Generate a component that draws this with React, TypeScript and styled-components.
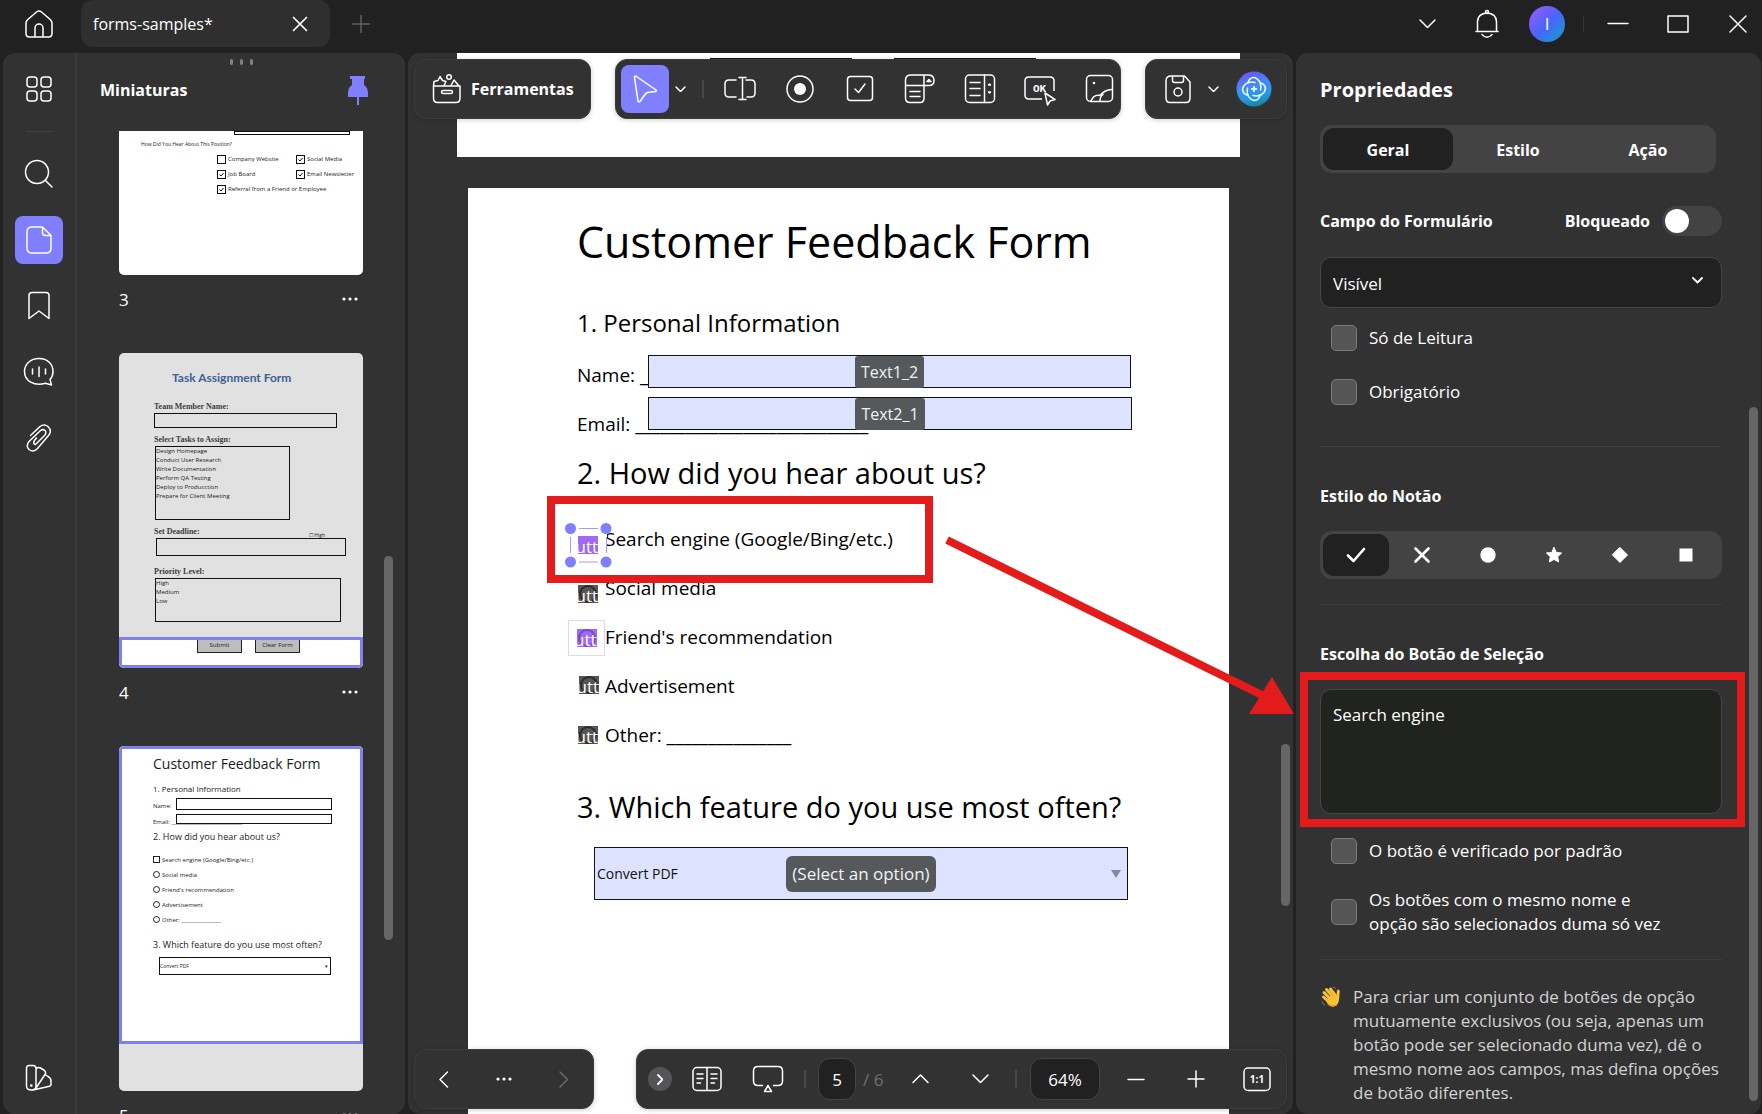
import React from "react";
import styled, { createGlobalStyle, css } from "styled-components";

const accent = "#7f7fff";
const red = "#e41b1b";
const panel = "#323232";
const dark = "#212121";

const Global = createGlobalStyle`
  *, *::before, *::after { box-sizing: border-box; }
  html, body { margin: 0; height: 100%; background: ${dark}; }
  #root { height: 100%; }
  body, button, input, select, textarea {
    font-family: "Open Sans", "Noto Sans", "Liberation Sans", sans-serif;
    font-size: 17px;
    color: #fff;
  }
  h1, h2, h3, p { margin: 0; }
`;

/* ---------- shared parts ---------- */

const Shell = styled.div`
  position: relative;
  display: flex;
  flex-direction: column;
  height: 100vh;
  overflow: hidden;
  background: ${dark};
`;

const IconButton = styled.button<{ $w?: number; $active?: boolean }>`
  display: flex;
  align-items: center;
  justify-content: center;
  flex: none;
  width: ${(p) => p.$w ?? 36}px;
  height: 48px;
  padding: 0;
  border: 0;
  border-radius: 8px;
  background: ${(p) => (p.$active ? accent : "transparent")};
  cursor: pointer;
`;

const Space = styled.span<{ $w: number }>`
  flex: none;
  width: ${(p) => p.$w}px;
`;

const Line = styled.span<{ $thin?: boolean }>`
  flex: none;
  width: ${(p) => (p.$thin ? 1 : 2)}px;
  height: 18px;
  background: ${(p) => (p.$thin ? "#333" : "#484848")};
`;

const Scrollbar = styled.div<{ $rows: string }>`
  display: grid;
  grid-template-rows: ${(p) => p.$rows};
  width: 9px;
  &::before { content: ""; }
`;

const ScrollThumb = styled.span`
  border-radius: 5px;
  background: #666;
`;

type IconProps = { w: number; h: number; sw?: number; color?: string; children: React.ReactNode };
const Icon = ({ w, h, sw = 1.5, color = "#fff", children }: IconProps) => (
  <svg width={w} height={h} viewBox={`0 0 ${w} ${h}`} fill="none" stroke={color} strokeWidth={sw}
    strokeLinecap="round" strokeLinejoin="round" aria-hidden="true">
    {children}
  </svg>
);

const Chevron = ({ w = 10, dir = "down", color, sw }: { w?: number; dir?: "down" | "up" | "left" | "right"; color?: string; sw?: number }) => {
  const s = w / 2;
  const paths = {
    down: [w + 2, s + 2, `M1 1L${s + 1} ${s + 1}L${w + 1} 1`],
    up: [w + 2, s + 2, `M1 ${s + 1}L${s + 1} 1L${w + 1} ${s + 1}`],
    left: [s + 2, w + 2, `M${s + 1} 1L1 ${s + 1}L${s + 1} ${w + 1}`],
    right: [s + 2, w + 2, `M1 1L${s + 1} ${s + 1}L1 ${w + 1}`],
  } as const;
  const [pw, ph, d] = paths[dir];
  return <Icon w={pw} h={ph} color={color} sw={sw}><path d={d} /></Icon>;
};

const Dots = ({ color = "#fff" }: { color?: string }) => (
  <Icon w={16} h={4} sw={0}>
    <g fill={color}><circle cx="2" cy="2" r="1.6" /><circle cx="8" cy="2" r="1.6" /><circle cx="14" cy="2" r="1.6" /></g>
  </Icon>
);

/* ---------- title bar ---------- */

const TitleBar = styled.header`
  display: flex;
  align-items: center;
  flex: none;
  height: 53px;
  padding: 0 6px 6px 15px;
`;

const Tab = styled.div`
  display: flex;
  align-items: center;
  justify-content: space-between;
  width: 249px;
  height: 47px;
  padding: 0 8px 0 12px;
  border-radius: 12px;
  background: #2f2f2f;
  font-size: 16px;
`;

const Avatar = styled.button`
  width: 36px;
  height: 36px;
  padding: 0;
  border: 0;
  border-radius: 50%;
  background: linear-gradient(135deg, #9a5cf8 5%, #4a63fa 50%, #0ba5c4 100%);
`;

const Grow = styled.span`
  flex: 1;
`;

/* ---------- frame ---------- */

const Body = styled.div`
  display: grid;
  grid-template-columns: 402px minmax(0, 1fr) 465px;
  gap: 3px;
  flex: 1;
  min-height: 0;
  padding: 0 1px 0 3px;
`;

const Panel = styled.section`
  min-height: 0;
  overflow: hidden;
  border-radius: 12px;
  background: ${panel};
`;

const LeftPanel = styled(Panel)`
  display: flex;
`;

const Rail = styled.nav`
  display: flex;
  flex-direction: column;
  align-items: center;
  gap: 18px;
  width: 74px;
  padding: 12px 0;
  border-right: 2px solid #3a3a3a;
`;

const RailLine = styled.span`
  width: 27px;
  height: 1px;
  background: #424242;
`;

const Thumbs = styled.div`
  display: flex;
  flex-direction: column;
  flex: 1;
  min-width: 0;
`;

const Grip = styled.div`
  display: flex;
  justify-content: center;
  gap: 7px;
  height: 12px;
  padding-top: 6px;
  span { width: 3px; height: 6px; border-radius: 2px; background: #808080; }
`;

const ThumbsHead = styled.div`
  display: flex;
  align-items: center;
  justify-content: space-between;
  height: 50px;
  margin-bottom: 16px;
  padding: 0 36px 0 23px;
  h2 { font-size: 16px; font-weight: 700; }
`;

const ThumbsBody = styled.div`
  display: flex;
  justify-content: space-between;
  flex: 1;
  min-height: 0;
  overflow: hidden;
  padding: 0 12px 0 42px;
`;

const ThumbList = styled.ol`
  display: flex;
  flex-direction: column;
  gap: 30px;
  width: 244px;
  margin: 0;
  padding: 0;
  list-style: none;
`;

const Mini = styled.div<{ $h: number; $cut?: boolean }>`
  height: ${(p) => p.$h}px;
  overflow: hidden;
  border-radius: ${(p) => (p.$cut ? "0 0 5px 5px" : "5px")};
  background: ${(p) => (p.$cut ? "#fff" : "#e1e1e1")};
  color: #1c1c1c;
  white-space: nowrap;
`;

const MiniCaption = styled.div`
  display: flex;
  align-items: center;
  justify-content: space-between;
  height: 48px;
  padding-right: 5px;
`;

const MiniText = styled.p<{ $size: number; $lh: number; $mt?: number; $serif?: boolean }>`
  margin-top: ${(p) => p.$mt ?? 0}px;
  font-size: ${(p) => p.$size}px;
  line-height: ${(p) => p.$lh}px;
  ${(p) => p.$serif && css`font-family: "Liberation Serif", serif; font-weight: 700; color: #3c3c3c;`}
`;

const MiniBox = styled.div<{ $w: number; $h: number; $mt?: number; $ml?: number }>`
  display: flex;
  flex: none;
  flex-direction: column;
  width: ${(p) => p.$w}px;
  height: ${(p) => p.$h}px;
  margin: ${(p) => p.$mt ?? 0}px 0 0 ${(p) => p.$ml ?? 0}px;
  border: 1px solid #111;
  font-size: 6px;
  line-height: 9px;
`;

const MiniTitle = styled.p`
  padding: 17px 0 0 18px;
  color: #3d5f94;
  font-family: Lato, "Open Sans", sans-serif;
  font-size: 12px;
  font-weight: 700;
  line-height: 16px;
`;

const MiniArea = styled.div<{ $h: number; $pl: number; $pt?: number }>`
  height: ${(p) => p.$h}px;
  padding: ${(p) => p.$pt ?? 0}px 0 0 ${(p) => p.$pl}px;
`;

const InView = styled.div<{ $h: number }>`
  height: ${(p) => p.$h}px;
  border: 3px solid #7f80ec;
  background: #fff;
`;

const MiniButtons = styled.div`
  display: flex;
  gap: 13px;
  padding-left: 75px;
  span {
    width: 45px;
    height: 13px;
    border: 1px solid #222;
    border-top: 0;
    background: #bdbdbd;
    font-size: 6px;
    line-height: 11px;
    text-align: center;
  }
`;

const MiniQuestion = styled.p`
  padding: 4px 0 0 22px;
  font-size: 5px;
  line-height: 10px;
`;

const MiniCheckGrid = styled.div`
  display: grid;
  grid-template-columns: 79px 1fr;
  row-gap: 6px;
  padding: 6px 0 0 98px;
  font-size: 6px;
  line-height: 9px;
`;

const MiniCheck = styled.span`
  display: flex;
  gap: 2px;
  svg { flex: none; }
`;

const MiniLines = styled.div`
  margin-top: 3px;
`;

const MiniRow = styled.div`
  display: flex;
  height: 16px;
  font-size: 6px;
  line-height: 16px;
  > span { width: 23px; }
  > div { background: #fff; z-index: 1; }
`;

const MiniOptions = styled.div`
  margin: 8px 0 11px;
`;

const MiniOption = styled.div`
  display: flex;
  align-items: center;
  gap: 2px;
  height: 15px;
  font-size: 6px;
`;

const MiniMark = styled.i<{ $round?: boolean }>`
  width: 7px;
  height: 7px;
  border: 1px solid #222;
  border-radius: ${(p) => (p.$round ? "50%" : "0")};
`;

const MiniSelect = styled.div`
  display: flex;
  justify-content: space-between;
  align-items: center;
  width: 172px;
  height: 18px;
  margin: 5px 0 0 6px;
  padding-right: 2px;
  border: 1px solid #111;
  font-size: 5px;
`;

const MiniSplit = styled.div`
  display: flex;
  justify-content: space-between;
  align-items: flex-end;
  padding-right: 38px;
  small { font-size: 5px; line-height: 6px; }
`;

/* ---------- document ---------- */

const Viewer = styled(Panel)`
  position: relative;
`;

const Pages = styled.div`
  display: flex;
  flex-direction: column;
  align-items: center;
  gap: 31px;
  height: 100%;
  padding-right: 4px;
`;

const PrevPage = styled.div`
  display: flex;
  justify-content: center;
  flex: none;
  gap: 42px;
  width: 783px;
  height: 104px;
  padding: 5px 0 0 48px;
  background: #fff;
  span { width: 142px; height: 2px; background: #111; }
`;

const Page = styled.article`
  position: relative;
  flex: none;
  width: 761px;
  height: 1076px;
  padding: 24px 0 0 109px;
  background: #fff;
  color: #000;
  white-space: nowrap;
  h1, h2, h3 { font-weight: 400; }
  h1 { font-size: 43px; line-height: 60px; }
  h2 { margin-top: 33px; font-size: 24px; line-height: 36px; }
  h3 { font-size: 29px; line-height: 40px; }
`;

const FormLine = styled.p<{ $indent?: boolean }>`
  height: 49px;
  padding-left: ${(p) => (p.$indent ? 28 : 0)}px;
  font-size: 19px;
  line-height: 49px;
`;

const Lines = styled.div<{ $mt: number; $mb: number }>`
  margin: ${(p) => p.$mt}px 0 ${(p) => p.$mb}px;
`;

/* Form widgets sit on the page at free positions. */
const Widget = styled.div<{ $x: number; $y: number; $w: number; $h: number }>`
  position: absolute;
  left: ${(p) => p.$x}px;
  top: ${(p) => p.$y}px;
  width: ${(p) => p.$w}px;
  height: ${(p) => p.$h}px;
  display: flex;
  align-items: center;
  justify-content: center;
`;

const fieldSkin = css`
  position: absolute;
  inset: 0;
  width: 100%;
  height: 100%;
  margin: 0;
  border: 1px solid #111;
  border-radius: 0;
  background: #dde2ff;
  color: #111;
  outline: 0;
`;

const FieldInput = styled.input`
  ${fieldSkin}
`;

const FieldSelect = styled.select`
  ${fieldSkin}
  appearance: none;
  padding: 0 2px;
  font-size: 14px;
`;

const FieldArrow = styled.span`
  position: absolute;
  right: 7px;
  border: 5px solid transparent;
  border-top: 8px solid #8388a8;
  border-bottom: 0;
`;

const FieldTag = styled.span<{ $big?: boolean }>`
  position: relative;
  padding: 0 6px;
  border-radius: ${(p) => (p.$big ? 6 : 3)}px;
  background: #56595b;
  color: #f2f2f2;
  font-size: ${(p) => (p.$big ? 17 : 16)}px;
  line-height: ${(p) => (p.$big ? 36 : 32)}px;
`;

const Chip = styled.span<{ $on?: boolean; $ring?: boolean }>`
  position: relative;
  display: flex;
  justify-content: flex-end;
  width: 20px;
  height: 18px;
  overflow: hidden;
  background: ${(p) => (p.$on ? "#a069f2" : "#565656")};
  color: #fff;
  line-height: 22px;
  ${(p) => p.$ring && css`
    &::before {
      content: "";
      position: absolute;
      inset: 0 1px;
      border: 2px solid ${p.$on ? "#7a48c8" : "#2b2b2b"};
      border-radius: 50%;
    }
  `}
  b { position: relative; font-weight: 400; }
`;

const Picked = styled.span`
  position: absolute;
  inset: 0;
  border: 1px solid #dcd8fa;
`;

const Handles = styled.svg`
  position: absolute;
  inset: 0;
`;

/* ---------- floating bars ---------- */

const Floating = styled.div<{ $bottom?: boolean }>`
  position: absolute;
  left: 6px;
  right: 6px;
  ${(p) => (p.$bottom ? "bottom: 5px;" : "top: 6px;")}
  display: flex;
  justify-content: space-between;
  gap: 24px;
`;

const Bar = styled.div<{ $grow?: boolean; $w?: number; $px?: number }>`
  display: flex;
  align-items: center;
  flex: ${(p) => (p.$grow ? "1" : "none")};
  min-width: 0;
  ${(p) => p.$w && `width: ${p.$w}px;`}
  height: 60px;
  padding: 0 ${(p) => p.$px ?? 5}px;
  border: 1px solid #3c3c3c;
  border-radius: 12px;
  background: ${panel};
  box-shadow: 0 1px 5px rgba(0, 0, 0, 0.2);
`;

const Tools = styled.button`
  display: flex;
  align-items: center;
  gap: 10px;
  padding: 0 12px;
  border: 0;
  background: none;
  font-size: 16px;
  font-weight: 700;
`;

const ToolGroup = styled.div`
  display: flex;
  gap: 24px;
`;

const Round = styled.button`
  display: flex;
  align-items: center;
  justify-content: center;
  flex: none;
  width: 24px;
  height: 24px;
  padding: 0;
  border: 0;
  border-radius: 50%;
  background: #555557;
`;

const NumberBox = styled.input<{ $w: number }>`
  flex: none;
  width: ${(p) => p.$w}px;
  height: 42px;
  padding: 0;
  border: 1px solid #444;
  border-radius: 12px;
  background: ${dark};
  text-align: center;
  outline: 0;
`;

const Total = styled.span`
  width: 32px;
  padding-left: 7px;
  color: #707070;
  white-space: nowrap;
`;

const ViewerScroll = styled.div`
  position: absolute;
  top: 0;
  right: 3px;
  bottom: 0;
  display: flex;
`;

/* ---------- properties ---------- */

const Props = styled(Panel)`
  display: flex;
  justify-content: space-between;
  padding-right: 3px;
`;

const PropsBody = styled.div`
  display: flex;
  flex-direction: column;
  width: 426px;
  padding: 23px 0 0 24px;
  h2 { font-size: 20px; font-weight: 700; line-height: 28px; }
`;

const Segments = styled.div<{ $mt: number; $wide?: boolean }>`
  display: flex;
  flex: none;
  height: 48px;
  margin: ${(p) => p.$mt}px ${(p) => (p.$wide ? 0 : 6)}px 0 0;
  padding: 3px;
  border-radius: 12px;
  background: #434343;
`;

const Segment = styled.button<{ $on?: boolean }>`
  display: flex;
  align-items: center;
  justify-content: center;
  flex: 1 1 0;
  min-width: 0;
  padding: 2px 0 0;
  border: 0;
  border-radius: 11px;
  background: ${(p) => (p.$on ? dark : "transparent")};
  font-size: 16px;
  font-weight: 700;
`;

const MarkSegment = styled(Segment)`
  padding: 0;
`;

const FieldHead = styled.div`
  display: flex;
  align-items: center;
  height: 30px;
  margin-top: 33px;
  font-size: 16px;
  font-weight: 700;
  label:first-child { flex: 1; }
`;

const Switch = styled.input`
  appearance: none;
  width: 60px;
  height: 30px;
  margin: 0 0 0 12px;
  padding: 3px;
  border-radius: 15px;
  background: #434343;
  &::before {
    content: "";
    display: block;
    width: 24px;
    height: 24px;
    border-radius: 50%;
    background: #fff;
  }
`;

const SelectWrap = styled.div`
  position: relative;
  margin-top: 21px;
  svg { position: absolute; right: 19px; top: 20px; pointer-events: none; }
`;

const Select = styled.select`
  appearance: none;
  display: block;
  width: 100%;
  height: 51px;
  padding: 2px 12px 0;
  border: 1px solid #464646;
  border-radius: 11px;
  background: ${dark};
`;

const CheckRow = styled.label<{ $mt: number }>`
  display: flex;
  align-items: center;
  gap: 12px;
  min-height: 26px;
  margin-top: ${(p) => p.$mt}px;
  padding-left: 11px;
  line-height: 24px;
  span { max-width: 300px; }
`;

const Check = styled.input`
  appearance: none;
  flex: none;
  width: 26px;
  height: 26px;
  margin: 0;
  border: 1px solid #7a7a7a;
  border-radius: 5px;
  background: #555;
`;

const Rule = styled.hr<{ $mt: number }>`
  width: 100%;
  height: 1px;
  margin: ${(p) => p.$mt}px 0 0;
  border: 0;
  background: #3e3e3e;
`;

const Heading = styled.h3`
  margin-top: 37px;
  font-size: 16px;
  font-weight: 700;
  line-height: 24px;
`;

const Choice = styled.div`
  position: relative;
  height: 125px;
  margin-top: 23px;
`;

const TextArea = styled.textarea`
  display: block;
  width: 100%;
  height: 100%;
  padding: 13px 12px;
  border: 1px solid #454745;
  border-radius: 11px;
  background: #21231f;
  line-height: 24px;
  resize: none;
  outline: 0;
`;

const Hint = styled.div`
  display: flex;
  gap: 11px;
  margin-top: 25px;
  color: #d2d2d2;
  line-height: 24px;
  svg { flex: none; }
`;

/* ---------- callouts ---------- */

const ChoiceMark = styled.span`
  position: absolute;
  inset: -17px -23px -13px -20px;
  border: 8px solid ${red};
  pointer-events: none;
`;

const OptionMark = styled.span`
  position: absolute;
  left: 79px;
  top: 308px;
  width: 386px;
  height: 87px;
  border: 8px solid ${red};
  pointer-events: none;
`;

const Arrow = styled.svg`
  position: absolute;
  left: 940px;
  top: 530px;
  pointer-events: none;
`;

/* ---------- content ---------- */

const miniChecks: [string, boolean][] = [
  ["Company Website", false], ["Social Media", true],
  ["Job Board", true], ["Email Newsletter", true],
  ["Referral from a Friend or Employee", true],
];

const tasks = ["Design Homepage", "Conduct User Research", "Write Documentation", "Perform QA Testing", "Deploy to Producction", "Prepare for Client Meeting"];

const options = ["Search engine (Google/Bing/etc.)", "Social media", "Friend's recommendation", "Advertisement"];

const radios = [
  { x: 110, y: 397, on: false },
  { x: 109, y: 441, on: true },
  { x: 111, y: 488, on: false },
  { x: 110, y: 538, on: false },
];

const Caption = ({ n }: { n: number }) => (
  <MiniCaption><span>{n}</span><Dots /></MiniCaption>
);

const Thumb3 = () => (
  <Mini $h={144} $cut>
    <MiniBox $w={116} $h={4} $ml={115} />
    <MiniQuestion>How Did You Hear About This Position?</MiniQuestion>
    <MiniCheckGrid>
      {miniChecks.map(([t, on]) => (
        <MiniCheck key={t}>
          <svg width="9" height="9" viewBox="0 0 9 9" fill="none" stroke="#111" aria-hidden="true">
            <rect x=".5" y=".5" width="8" height="8" />
            {on && <path d="M2.5 4.5L4 6L6.500 3" />}
          </svg>
          {t}
        </MiniCheck>
      ))}
    </MiniCheckGrid>
  </Mini>
);

const Thumb4 = () => (
  <Mini $h={315}>
    <MiniArea $h={284} $pl={35}>
      <MiniTitle>Task Assignment Form</MiniTitle>
      <MiniText $size={8} $lh={12} $mt={15} $serif>Team Member Name:</MiniText>
      <MiniBox $w={183} $h={15} />
      <MiniText $size={8} $lh={12} $mt={6} $serif>Select Tasks to Assign:</MiniText>
      <MiniBox $w={135} $h={74} $ml={1}>{tasks.map((t) => <span key={t}>{t}</span>)}</MiniBox>
      <MiniSplit>
        <MiniText $size={8} $lh={12} $mt={6} $serif>Set Deadline:</MiniText>
        <small>☐ High</small>
      </MiniSplit>
      <MiniBox $w={190} $h={18} $ml={2} />
      <MiniText $size={8} $lh={12} $mt={10} $serif>Priority Level:</MiniText>
      <MiniBox $w={186} $h={44} $ml={1}><span>High</span><span>Medium</span><span>Low</span></MiniBox>
    </MiniArea>
    <InView $h={31}>
      <MiniButtons><span>Submit</span><span>Clear Form</span></MiniButtons>
    </InView>
  </Mini>
);

const Thumb5 = () => (
  <Mini $h={345}>
    <InView $h={298}>
      <MiniArea $h={292} $pl={31} $pt={5}>
        <MiniText $size={14} $lh={20}>Customer Feedback Form</MiniText>
        <MiniText $size={8} $lh={12} $mt={9}>1. Personal Information</MiniText>
        <MiniLines>
          <MiniRow><span>Name:</span><MiniBox $w={156} $h={12} /></MiniRow>
          <MiniRow><span>Email: ___________________________</span><MiniBox $w={156} $h={10} /></MiniRow>
        </MiniLines>
        <MiniText $size={9} $lh={14}>2. How did you hear about us?</MiniText>
        <MiniOptions>
          {options.map((o, i) => <MiniOption key={o}><MiniMark $round={i > 0} />{o}</MiniOption>)}
          <MiniOption><MiniMark $round />Other: _______________</MiniOption>
        </MiniOptions>
        <MiniText $size={9} $lh={14}>3. Which feature do you use most often?</MiniText>
        <MiniSelect><span>Convert PDF</span><span>▾</span></MiniSelect>
      </MiniArea>
    </InView>
  </Mini>
);

const Logo = () => (
  <svg width="36" height="36" viewBox="0 0 36 36" fill="none" aria-hidden="true">
    <defs>
      <linearGradient id="ai" x1="0.35" y1="0" x2="0.6" y2="1">
        <stop offset="0" stopColor="#6b58f0" /><stop offset=".45" stopColor="#3f8ff5" /><stop offset=".75" stopColor="#2399dc" /><stop offset="1" stopColor="#14809a" />
      </linearGradient>
    </defs>
    <circle cx="18" cy="18" r="17.5" fill="url(#ai)" />
    <g stroke="#e9fbff" strokeWidth="1.5" strokeLinecap="round">
      {[0, 90, 180, 270].map((a) => (
        <path key={a} transform={`rotate(${a} 18 18)`} d="M12 12C12.500 7.500 17 5 21 7.800C24.500 10.500 25.500 14.500 24.500 19" />
      ))}
      <path d="M18 15.800v4.400M15.800 18h4.400" strokeWidth="1.8" />
    </g>
  </svg>
);

const Wave = () => (
  <svg width="22" height="24" viewBox="0 0 22 24" fill="none" strokeLinecap="round" aria-hidden="true">
    <g stroke="#f6c236" strokeWidth="3">
      <path d="M4 7.5L11 14.5M6.5 4.5L13 11.5M10.5 4L15 10M3.5 12L9 17" />
    </g>
    <path d="M8 12L15 8.500L16.500 10L17 5.500Q18.500 3.500 19.800 6L19 15Q18 21 13 21.500Q9.500 21.500 6.500 17Z" fill="#f6c236" />
    <path d="M8 19Q12 22.500 16.500 20" stroke="#e39a28" strokeWidth="1.200" />
    <path d="M7 8.500L11.500 13.500M10 6.500L14 11.500" stroke="#d9912a" strokeWidth=".7" />
    <path d="M2 16.500Q2.500 19.500 5 20.500M13 2Q15.500 2.300 16 4" stroke="#777" strokeWidth="1" />
  </svg>
);

const toolIcons: [string, React.ReactNode][] = [
  ["Campo de texto", <Icon w={34} h={26} key="t"><path d="M13 4H6Q2 4 2 8V17Q2 21 6 21H13M23 4H28Q32 4 32 8V17Q32 21 28 21H24M16 1.500H23M16 23.500H23M19.500 1.500V23.500" /></Icon>],
  ["Botão de opção", <Icon w={30} h={30} key="r"><circle cx="15" cy="15" r="13" /><circle cx="15" cy="15" r="6" fill="#fff" stroke="none" /></Icon>],
  ["Caixa de seleção", <Icon w={28} h={28} key="c"><rect x="1.500" y="1.500" width="25" height="24" rx="3" /><path d="M9 14L12.500 17.500L19 9" /></Icon>],
  ["Lista suspensa", <Icon w={32} h={32} key="d"><path d="M7 2H25Q30 2.500 30 7.500Q30 12.500 25 12.500H20V25Q20 29.500 16 29.500H6Q1.500 29.500 1.500 25V7Q1.500 2 7 2ZM20 2V12.500M1.500 12.500H20M6 18.500H16M6 23.500H16" /><path d="M23 8.500L25 6.500L27 8.500Z" fill="#fff" /></Icon>],
  ["Caixa de lista", <Icon w={32} h={32} key="l"><rect x="1.500" y="2" width="29" height="27.500" rx="4" /><path d="M20.500 2V29.500M6 9.500H16M6 15.500H16M6 22.500H16" /><path d="M24.500 12L25.500 11L26.500 12ZM24.500 19L25.500 20L26.500 19Z" fill="#fff" /></Icon>],
  ["Botão", <svg width="34" height="34" viewBox="0 0 34 34" fill="none" stroke="#fff" strokeWidth="1.5" strokeLinejoin="round" key="b" aria-hidden="true"><path d="M19 27H6Q2 27 2 23V9Q2 5 6 5H27Q31 5 31 9V19" /><path d="M22 21L32 27.500L27 29L24.500 33Z" /><text x="10" y="20" fontSize="11" fontWeight="700" stroke="none" fill="#fff" fontFamily="Liberation Mono, monospace">OK</text></svg>],
  ["Imagem", <Icon w={30} h={30} key="i"><rect x="1.500" y="1.500" width="26" height="26" rx="4" /><path d="M6 27Q9 20 15 21.500Q19 16 27 15.500M15 27Q15 22.500 18 20.500" /><circle cx="9" cy="9" r="1.300" fill="#fff" stroke="none" /></Icon>],
];

export default function App() {
  return (
    <Shell>
      <Global />
      <TitleBar>
        <IconButton $w={48} aria-label="Início">
          <Icon w={28} h={30}><path d="M1 14Q1 12 2.500 10.800L11.500 3Q14 1 16.500 3L25.500 10.800Q27 12 27 14V24.500Q27 28 23.500 28H4.500Q1 28 1 24.500ZM10 28V19a4 4 0 0 1 8 0V28" /></Icon>
        </IconButton>
        <Space $w={18} />
        <Tab>
          <span>forms-samples*</span>
          <IconButton $w={44} aria-label="Fechar separador"><Icon w={16} h={16} sw={1.7}><path d="M1.500 1.500L14.500 14.500M14.500 1.500L1.500 14.500" /></Icon></IconButton>
        </Tab>
        <Space $w={13} />
        <IconButton aria-label="Novo separador"><Icon w={18} h={18} color="#606060"><path d="M9 .5V17.500M.5 9H17.500" /></Icon></IconButton>
        <Grow />
        <IconButton aria-label="Mais"><Chevron w={15} /></IconButton>
        <Space $w={24} />
        <IconButton aria-label="Notificações">
          <Icon w={24} h={30}><path d="M2.500 22V12.500Q3 4.500 12 4Q21 4.500 21.500 12.500V22M1 22.500H23M7 25.500Q12 31 17 25.500" /><circle cx="12" cy="3" r="1.500" /></Icon>
        </IconButton>
        <Space $w={24} />
        <Avatar aria-label="Conta">I</Avatar>
        <Space $w={18} />
        <Line $thin />
        <Space $w={16} />
        <IconButton aria-label="Minimizar"><Icon w={22} h={3}><path d="M1 1.500H21" /></Icon></IconButton>
        <Space $w={24} />
        <IconButton aria-label="Maximizar"><Icon w={22} h={18}><rect x="1" y="1" width="20" height="16" /></Icon></IconButton>
        <Space $w={24} />
        <IconButton aria-label="Fechar"><Icon w={18} h={18}><path d="M1 1L17 17M17 1L1 17" /></Icon></IconButton>
      </TitleBar>

      <Body>
        <LeftPanel>
          <Rail aria-label="Painéis">
            <IconButton $w={48} aria-label="Organizar">
              <Icon w={26} h={26}><rect x="1" y="1" width="10" height="10" rx="3" /><rect x="15" y="1" width="10" height="10" rx="3" /><rect x="1" y="15" width="10" height="10" rx="3" /><rect x="15" y="15" width="10" height="10" rx="3" /></Icon>
            </IconButton>
            <RailLine />
            <IconButton $w={48} aria-label="Procurar"><Icon w={30} h={30}><circle cx="13" cy="13" r="11.500" /><path d="M21.500 21.500L28 28" /></Icon></IconButton>
            <IconButton $w={48} $active aria-label="Miniaturas">
              <Icon w={26} h={30}><path d="M6 2H16.500L25 10.500V23Q25 28 20 28H6Q1 28 1 23V7Q1 2 6 2ZM16.500 2V7.500Q16.500 10.500 19.500 10.500H25" /></Icon>
            </IconButton>
            <IconButton $w={48} aria-label="Marcadores"><Icon w={24} h={30}><path d="M5 1.500H19Q22 1.500 22 4.500V27.500L12 20L2 27.500V4.500Q2 1.500 5 1.500Z" /></Icon></IconButton>
            <IconButton $w={48} aria-label="Comentários">
              <Icon w={32} h={30}><path d="M16 1.500C24.500 1.500 30 7 30 14.500C30 18 29 20.500 27 22.500L28.500 28L22.500 26.300C11 29.500 1.500 24 1.500 14.500C1.500 7 7.500 1.500 16 1.500ZM9.500 12V17M16 10V19.500M22.500 12V17" /></Icon>
            </IconButton>
            <IconButton $w={48} aria-label="Anexos">
              <Icon w={26} h={30}><path d="M4.500 12.500L14 3.500Q18 .5 22 3.500Q26.500 8 22.500 12.500L11.500 25.500Q7.500 30 3 26.500Q-.5 23 3 18.500L14.500 7.500Q17.500 5.500 19.500 8Q20.500 10 18.500 12.500L9.500 21.500M10.500 15L8.500 17.500Q7 20 8.500 21.200" /></Icon>
            </IconButton>
            <Grow />
            <IconButton $w={48} aria-label="Tema">
              <Icon w={28} h={28}><path d="M4 1.500H8Q11 1.500 11 4.500V22Q11 26 6.500 26Q1.500 26 1.500 22V4.500Q1.500 1.500 4 1.500ZM11 5Q13 2.500 15.500 4L19.500 6.500Q21.500 8.500 20 10.500L11 24M20 10.500L23 12.500Q26 14 26 17V19.500Q26.500 22 23.500 22.500L8 26" /><circle cx="6.300" cy="21.500" r=".6" /></Icon>
            </IconButton>
          </Rail>
          <Thumbs>
            <Grip><span /><span /><span /></Grip>
            <ThumbsHead>
              <h2>Miniaturas</h2>
              <Icon w={22} h={30} color={accent} sw={0}><path fill={accent} d="M3 1H18V4H17V10Q21 12.500 21 18V22H12V30H10V22H1V18Q1 12.500 5 10V4H3Z" /></Icon>
            </ThumbsHead>
            <ThumbsBody>
              <ThumbList>
                <li><Thumb3 /><Caption n={3} /></li>
                <li><Thumb4 /><Caption n={4} /></li>
                <li><Thumb5 /><Caption n={5} /></li>
              </ThumbList>
              <Scrollbar $rows="425fr 384fr 174fr"><ScrollThumb /></Scrollbar>
            </ThumbsBody>
          </Thumbs>
        </LeftPanel>

        <Viewer>
          <Pages>
            <PrevPage><span /><span /></PrevPage>
            <Page>
              <h1>Customer Feedback Form</h1>
              <h2>1. Personal Information</h2>
              <Lines $mt={10} $mb={4}>
                <FormLine>Name: ___________________________</FormLine>
                <FormLine>Email: ____________________________</FormLine>
              </Lines>
              <h3>2. How did you hear about us?</h3>
              <Lines $mt={22} $mb={27}>
                {options.map((o) => <FormLine $indent key={o}>{o}</FormLine>)}
                <FormLine $indent>Other: _______________</FormLine>
              </Lines>
              <h3>3. Which feature do you use most often?</h3>

              <Widget $x={180} $y={167} $w={483} $h={33}><FieldInput aria-label="Name" readOnly /><FieldTag>Text1_2</FieldTag></Widget>
              <Widget $x={180} $y={209} $w={484} $h={33}><FieldInput aria-label="Email" readOnly /><FieldTag>Text2_1</FieldTag></Widget>
              <Widget $x={126} $y={659} $w={534} $h={53}>
                <FieldSelect aria-label="Feature"><option>Convert PDF</option></FieldSelect>
                <FieldArrow />
                <FieldTag $big>(Select an option)</FieldTag>
              </Widget>
              {radios.map((r) => (
                <Widget key={r.y} $x={r.on ? r.x - 9 : r.x} $y={r.on ? r.y - 9 : r.y} $w={r.on ? 37 : 20} $h={r.on ? 36 : 18}>
                  {r.on && <Picked />}
                  <Chip $on={r.on} $ring><b>utt</b></Chip>
                </Widget>
              ))}
              <Widget $x={96} $y={334} $w={48} $h={46}>
                <Handles width="48" height="46" viewBox="0 0 48 46" aria-hidden="true">
                  <rect x="6" y="6" width="37" height="34" fill="#fff" />
                  <path d="M15 6.500H34M15 40H34M6.500 15V31M42.500 15V31" stroke="#9c9cf5" />
                  <g fill={accent}><circle cx="6.500" cy="6.500" r="5.500" /><circle cx="42" cy="6.500" r="5.500" /><circle cx="6.500" cy="40" r="5.500" /><circle cx="42" cy="40" r="5.500" /></g>
                </Handles>
                <Chip $on><b>utt</b></Chip>
              </Widget>
              <OptionMark />
            </Page>
          </Pages>

          <ViewerScroll><Scrollbar $rows="690fr 162fr 208fr"><ScrollThumb /></Scrollbar></ViewerScroll>

          <Floating>
            <Bar $w={177}>
              <Tools>
                <Icon w={29} h={32}><path d="M1.500 13H28V25Q28 29.500 24 29.500H5.500Q1.500 29.500 1.500 25ZM1.500 13L2 8.500L6 7.500L8 3.500L10.500 7.500L14 8.500L12 12.500M19 12.500L22 7L26.500 12.500" /><circle cx="17" cy="4" r="2.300" /><rect x="9.500" y="17.500" width="11" height="3" rx="1.500" /></Icon>
                Ferramentas
              </Tools>
            </Bar>
            <Bar $grow>
              <IconButton $w={48} $active aria-label="Selecionar">
                <Icon w={26} h={30}><path d="M4.500 2.500L24 16Q25 17 23.500 17.500L15.500 18.500Q14 19 13 20.500L8 27.500Q6.500 28.500 6 27L2.500 3.500Q2.500 1.500 4.500 2.500Z" /></Icon>
              </IconButton>
              <IconButton $w={22} aria-label="Opções de seleção"><Chevron w={9} /></IconButton>
              <Space $w={11} /><Line /><Space $w={18} />
              <ToolGroup>
                {toolIcons.map(([label, icon]) => <IconButton key={label} aria-label={label}>{icon}</IconButton>)}
              </ToolGroup>
            </Bar>
            <Bar $w={142} $px={14}>
              <IconButton aria-label="Guardar">
                <Icon w={26} h={30}><path d="M6 2H19.500L25 8V24Q25 28.500 21 28.500H5Q1 28.500 1 24V7Q1 2 6 2ZM7.500 2V6.500Q7.500 8.500 9.500 8.500H16.500Q18.500 8.500 18.500 6.500V2" /><circle cx="13" cy="18" r="4" /></Icon>
              </IconButton>
              <Space $w={6} />
              <IconButton $w={22} aria-label="Opções de guardar"><Chevron w={9} /></IconButton>
              <Space $w={12} />
              <IconButton aria-label="Assistente"><Logo /></IconButton>
            </Bar>
          </Floating>

          <Floating $bottom>
            <Bar $w={180} $px={11}>
              <IconButton aria-label="Anterior"><Chevron w={15} dir="left" /></IconButton>
              <Grow />
              <IconButton aria-label="Mais"><Dots /></IconButton>
              <Grow />
              <IconButton aria-label="Seguinte"><Chevron w={15} dir="right" color="#6a6a6a" /></IconButton>
            </Bar>
            <Bar $px={11}>
              <Round aria-label="Expandir"><Chevron w={9} dir="right" sw={1.8} /></Round>
              <Space $w={17} />
              <IconButton aria-label="Modo de página">
                <Icon w={30} h={26}><rect x="1" y="1.500" width="28" height="23" rx="4" /><path d="M15 1.500V24.500M5 8H11M5 12.500H11M5 17H8.500M19 8H25M19 12.500H25M19 17H22.500" /></Icon>
              </IconButton>
              <Space $w={25} />
              <IconButton aria-label="Apresentação">
                <Icon w={32} h={28}><path d="M10.500 20.500H6Q1.500 20.500 1.500 16V6Q1.500 1.500 6 1.500H26Q30.500 1.500 30.500 6V16Q30.500 20.500 26 20.500H21.500M16 20.500L19.500 26.500H12.500Z" /></Icon>
              </IconButton>
              <Space $w={18} /><Line /><Space $w={12} />
              <NumberBox $w={38} aria-label="Página" defaultValue="5" />
              <Total>/ 6</Total>
              <Space $w={14} />
              <IconButton aria-label="Página anterior"><Chevron w={15} dir="up" /></IconButton>
              <Space $w={24} />
              <IconButton aria-label="Página seguinte"><Chevron w={15} /></IconButton>
              <Space $w={17} /><Line /><Space $w={13} />
              <NumberBox $w={70} aria-label="Zoom" defaultValue="64%" />
              <Space $w={18} />
              <IconButton aria-label="Reduzir"><Icon w={18} h={3}><path d="M1 1.500H17" /></Icon></IconButton>
              <Space $w={24} />
              <IconButton aria-label="Ampliar"><Icon w={18} h={18}><path d="M9 1V17M1 9H17" /></Icon></IconButton>
              <Space $w={25} />
              <IconButton aria-label="Tamanho real">
                <svg width="28" height="25" viewBox="0 0 28 25" fill="none" aria-hidden="true">
                  <rect x="1" y="1" width="26" height="22.500" rx="4" stroke="#fff" strokeWidth="1.500" />
                  <text x="14" y="16" textAnchor="middle" fontSize="10" fontWeight="700" fill="#fff">1:1</text>
                </svg>
              </IconButton>
            </Bar>
          </Floating>
        </Viewer>

        <Props>
          <PropsBody>
            <h2>Propriedades</h2>
            <Segments $mt={21} role="tablist">
              <Segment $on role="tab" aria-selected>Geral</Segment>
              <Segment role="tab">Estilo</Segment>
              <Segment role="tab">Ação</Segment>
            </Segments>
            <FieldHead>
              <label htmlFor="campo">Campo do Formulário</label>
              <label htmlFor="bloq">Bloqueado</label>
              <Switch id="bloq" type="checkbox" role="switch" />
            </FieldHead>
            <SelectWrap>
              <Select id="campo"><option>Visível</option></Select>
              <Chevron w={9} sw={1.8} />
            </SelectWrap>
            <CheckRow $mt={17}><Check type="checkbox" /><span>Só de Leitura</span></CheckRow>
            <CheckRow $mt={28}><Check type="checkbox" /><span>Obrigatório</span></CheckRow>
            <Rule $mt={41} />
            <Heading>Estilo do Notão</Heading>
            <Segments $mt={23} $wide>
              <MarkSegment $on aria-label="Visto"><Icon w={20} h={18} sw={2.6}><path d="M2 9.500L7.500 15L18 3" /></Icon></MarkSegment>
              <MarkSegment aria-label="Cruz"><Icon w={18} h={18} sw={2.6}><path d="M2.500 2.500L15.500 15.500M15.500 2.500L2.500 15.500" /></Icon></MarkSegment>
              <MarkSegment aria-label="Círculo"><Icon w={16} h={16} sw={0}><circle cx="8" cy="8" r="7.700" fill="#fff" /></Icon></MarkSegment>
              <MarkSegment aria-label="Estrela"><Icon w={18} h={18} sw={1}><path fill="#fff" d="M9 1.500L11.300 6.400L16.600 7L12.700 10.700L13.700 16L9 13.400L4.300 16L5.300 10.700L1.400 7L6.700 6.400Z" /></Icon></MarkSegment>
              <MarkSegment aria-label="Losango"><Icon w={18} h={18} sw={1}><path fill="#fff" d="M9 1.500L16.500 9L9 16.500L1.500 9Z" /></Icon></MarkSegment>
              <MarkSegment aria-label="Quadrado"><Icon w={14} h={14} sw={0}><rect x=".5" y=".5" width="13" height="13" fill="#fff" /></Icon></MarkSegment>
            </Segments>
            <Rule $mt={25} />
            <Heading as="label" htmlFor="escolha">Escolha do Botão de Seleção</Heading>
            <Choice>
              <TextArea id="escolha" defaultValue="Search engine" />
              <ChoiceMark />
            </Choice>
            <CheckRow $mt={24}><Check type="checkbox" /><span>O botão é verificado por padrão</span></CheckRow>
            <CheckRow $mt={24}><Check type="checkbox" /><span>Os botões com o mesmo nome e opção são selecionados duma só vez</span></CheckRow>
            <Rule $mt={23} />
            <Hint>
              <Wave />
              <p>Para criar um conjunto de botões de opção mutuamente exclusivos (ou seja, apenas um botão pode ser selecionado duma vez), dê o mesmo nome aos campos, mas defina opções de botão diferentes.</p>
            </Hint>
          </PropsBody>
          <Scrollbar $rows="354fr 694fr 13fr"><ScrollThumb /></Scrollbar>
        </Props>
      </Body>

      <Arrow width="360" height="190" viewBox="0 0 360 190" aria-hidden="true">
        <path d="M7 10L330 169" stroke={red} strokeWidth="8" />
        <path d="M309 184L332 147L354 184Z" fill={red} />
      </Arrow>
    </Shell>
  );
}
